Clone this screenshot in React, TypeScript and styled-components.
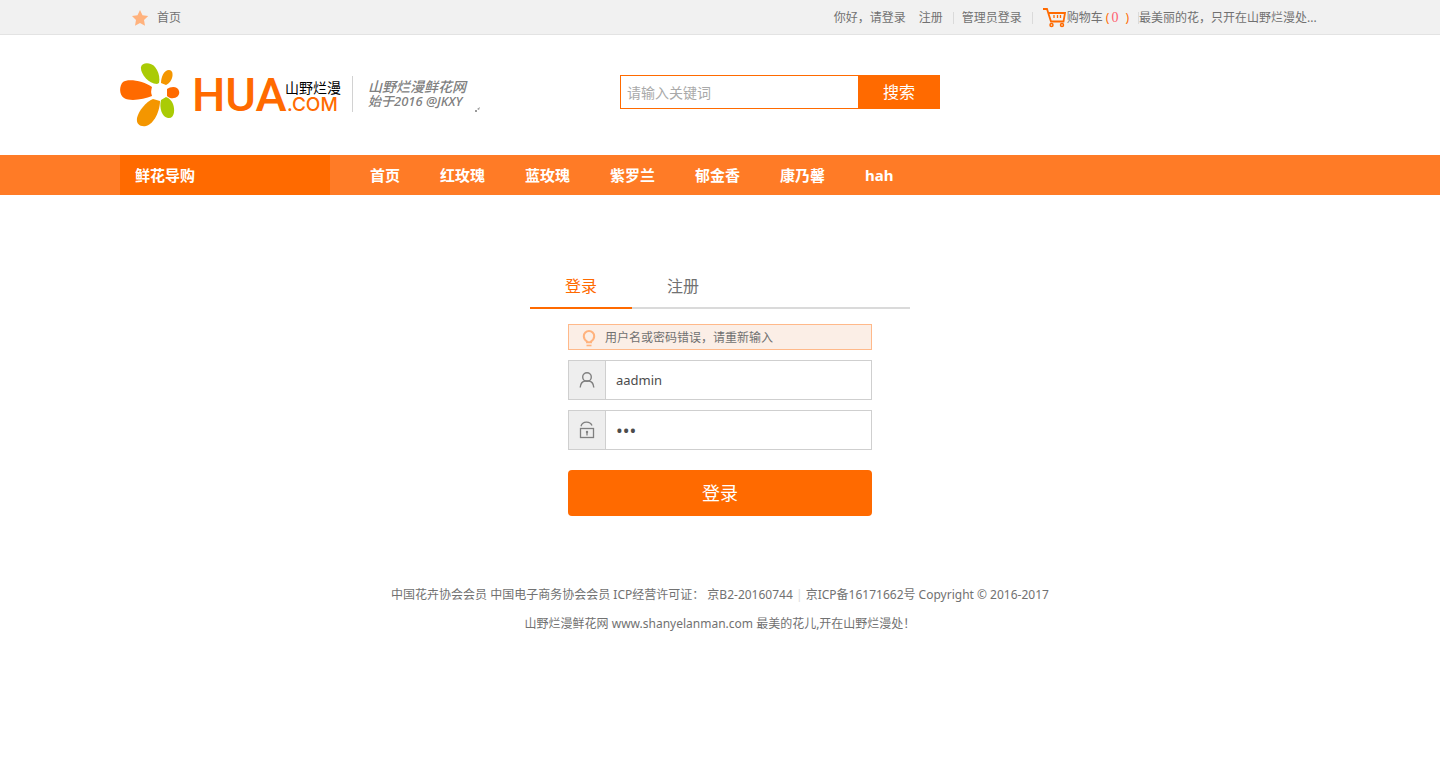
import React, { useState } from "react";
import styled, { createGlobalStyle } from "styled-components";

const orange = "#ff6a00";
const grey = "#717171";

const GlobalStyle = createGlobalStyle`
  *, *::before, *::after { box-sizing: border-box; }
  body {
    margin: 0;
    background: #fff;
    color: ${grey};
    font: 12px/18px "Noto Sans", "Noto Sans CJK SC", sans-serif;
  }
  a { color: inherit; text-decoration: none; }
  button, input { font-family: inherit; margin: 0; }
  ul { margin: 0; padding: 0; list-style: none; }
`;

const Container = styled.div`
  width: 100%;
  max-width: 1200px;
  margin: 0 auto;
  display: flex;
  align-items: center;
`;

const TopBar = styled.div`
  background: #f1f1f1;
  border-bottom: 1px solid #e3e3e3;
`;

const TopInner = styled(Container)`
  min-height: 34px;
  padding-top: 2px;
  justify-content: space-between;
`;

const HomeLink = styled.a`
  display: flex;
  align-items: center;
  gap: 8px;
  padding-left: 12px;
`;

const TopLinks = styled.div`
  display: flex;
  align-items: center;
`;

const TopLink = styled.a<{ $left?: number; $right?: number }>`
  display: flex;
  align-items: center;
  padding-left: ${(p) => p.$left ?? 0}px;
  padding-right: ${(p) => p.$right ?? 0}px;
`;

const Divider = styled.span`
  width: 1px;
  height: 12px;
  background: #dadada;
`;

const CartCount = styled.span`
  display: flex;
  gap: 2px;
  padding: 0 9px 0 3px;
  color: ${orange};
  b { font: 14px/18px "Liberation Serif", serif; color: #ff5f6f; padding-right: 5px; }
`;

const Header = styled(Container)`
  min-height: 120px;
  padding-bottom: 2px;
`;

const Brand = styled.div`
  display: flex;
  align-items: center;
  flex: 0 0 500px;
`;

const LogoLink = styled.a`
  display: block;
  height: 64px;
  padding-top: 1px;
`;

const Slogan = styled.div`
  display: flex;
  align-items: flex-start;
  width: 128px;
  height: 36px;
  margin-left: 11px;
  padding: 2px 0 0 15px;
  border-left: 1px solid #d2d2d2;
  color: #808080;
  font-style: italic;
  font-weight: 500;
`;

const SloganText = styled.p`
  width: 98px;
  margin: 0;
  white-space: nowrap;
  font-size: 13px;
  line-height: 13px;
  strong { display: block; font-size: 14px; font-weight: 500; line-height: 17px; }
`;

const SloganMark = styled.svg`
  flex: none;
  align-self: flex-end;
  margin-left: 9px;
`;

const Search = styled.form`
  display: flex;
  width: 320px;
  height: 34px;
  margin-bottom: 4px;
`;

const SearchInput = styled.input`
  flex: 1;
  min-width: 0;
  padding: 0 6px;
  border: 1px solid ${orange};
  border-right: 0;
  border-radius: 0;
  outline: 0;
  font-size: 14px;
  &::placeholder { color: #a9a9a9; opacity: 1; }
`;

const SearchButton = styled.button`
  width: 82px;
  padding: 0 0 2px;
  border: 0;
  background: ${orange};
  color: #fff;
  font-size: 16px;
`;

const NavBar = styled.nav`
  background: #ff7b26;
  color: #fff;
  font-size: 15px;
  font-weight: 700;
  line-height: 40px;
`;

const Guide = styled.a`
  width: 210px;
  margin-right: 20px;
  padding-left: 15px;
  background: ${orange};
`;

const NavList = styled.ul`
  display: flex;
  a { display: block; padding: 0 20px; }
`;

const LoginPanel = styled.main`
  width: 100%;
  max-width: 380px;
  margin: 70px auto 0;
`;

const Tabs = styled.div`
  display: flex;
  border-bottom: 2px solid #dadada;
`;

const Tab = styled.button<{ $active?: boolean }>`
  height: 44px;
  margin-bottom: -2px;
  padding: 0 35px 2px;
  border: 0;
  border-bottom: 2px solid ${(p) => (p.$active ? orange : "transparent")};
  background: none;
  color: ${(p) => (p.$active ? orange : grey)};
  font-size: 16px;
`;

const LoginForm = styled.form`
  display: flex;
  flex-direction: column;
  gap: 10px;
  padding: 15px 38px 0;
`;

const Notice = styled.div`
  display: flex;
  align-items: center;
  gap: 9px;
  height: 26px;
  padding: 2px 0 0 13px;
  border: 1px solid #ffb98a;
  background: #fbeee6;
`;

const Field = styled.div`
  display: flex;
  height: 40px;
  border: 1px solid #cfcfcf;
`;

const FieldIcon = styled.label`
  display: flex;
  align-items: center;
  justify-content: center;
  width: 37px;
  background: #eee;
  border-right: 1px solid #cfcfcf;
`;

const FieldInput = styled.input`
  flex: 1;
  min-width: 0;
  padding: 0 10px;
  border: 0;
  outline: 0;
  color: #4c4c4c;
  font-size: 13px;
  &[type="password"] { font-size: 18px; }
`;

const SubmitButton = styled.button`
  height: 46px;
  margin-top: 10px;
  padding: 0 0 2px;
  border: 0;
  border-radius: 4px;
  background: ${orange};
  color: #fff;
  font-size: 18px;
`;

const TopMessage = styled(TopLink)`
  min-width: 181px;
`;

const Footer = styled.footer`
  padding: 64px 0 20px;
  text-align: center;
  line-height: 29px;
  p { margin: 0; }
  i { color: #ddd; font-style: normal; }
`;

const Logo = () => (
  <svg width="221" height="64" viewBox="0 0 221 64" role="img" aria-label="HUA.COM">
    <path d="M37 21C28 21 20 10 21 4c1-5 10-5 14 0 4 5 5 11 4 16Z" fill="#aacb05" />
    <path d="M41 20c0-6 3-13 8-13 6 0 4 12-3 15Z" fill="#f49600" />
    <path d="M32 24C24 18 8 15 3 19c-4 4-4 13 1 16 7 4 20 1 28-2-1-3-1-6 0-9Z" fill={orange} />
    <path d="M47 26c4-3 11-3 12 2 2 6-7 10-12 5Z" fill={orange} />
    <path d="M40 38c0 10-6 23-14 25-6 1-10-2-9-8 2-8 9-16 16-19Z" fill="#f49600" />
    <path d="M41 37c-2 8 1 17 7 18 7 1 7-9 5-14-1-3-4-6-7-7Z" fill="#aacb05" />
    <circle cx="39" cy="29" r="7.500" fill="#fff" />
    <text x="72" y="48" fill={orange} fontFamily="Roboto, sans-serif" fontSize="47" fontWeight="500">HUA</text>
    <text x="167" y="48" fill={orange} fontFamily="Inter, sans-serif" fontSize="19" fontWeight="500">.COM</text>
    <text x="165" y="30" fill="#000" fontFamily="Noto Sans CJK SC, sans-serif" fontSize="14">山野烂漫</text>
  </svg>
);

const StarIcon = () => (
  <svg width="17" height="17" viewBox="0 0 17 17" aria-hidden="true">
    <path d="M8 0l2.500 5.200 5.700.8-4.200 4 1 5.700-5-2.700-5 2.700 1-5.700-4-4 5.500-.8Z" fill="#ffb27d" />
  </svg>
);

const CartIcon = () => (
  <svg width="24" height="20" viewBox="0 0 24 20" fill="none" stroke={orange} aria-hidden="true">
    <path d="M0 1h4l4 12.500h12.500L22 5H6" strokeWidth="1.800" />
    <path d="M11 7v3M14.500 7v3M17.500 7v3" strokeWidth="1.300" />
    <circle cx="8.500" cy="17" r="1.500" strokeWidth="1.500" />
    <circle cx="19" cy="17" r="1.500" strokeWidth="1.500" />
  </svg>
);

const BulbIcon = () => (
  <svg width="14" height="17" viewBox="0 0 14 17" fill="none" stroke="#ffb27d" strokeWidth="2" aria-hidden="true">
    <path d="M5 11.500C3 10 1.800 8.500 1.800 6.200a5.200 5.200 0 0 1 10.400 0c0 2.300-1.200 3.800-3.200 5.300v.8H5Z" />
    <path d="M4.500 15.500h5" strokeWidth="1.600" />
  </svg>
);

const UserIcon = () => (
  <svg width="16" height="16" viewBox="0 0 16 16" fill="none" stroke="#808080" strokeWidth="1.400" aria-hidden="true">
    <circle cx="8" cy="5" r="4.300" />
    <path d="M1.200 15.500c.3-3.800 2.500-6.200 5-6.500h3.600c2.500.3 4.700 2.700 5 6.500" />
  </svg>
);

const LockIcon = () => (
  <svg width="16" height="18" viewBox="0 0 16 18" fill="none" stroke="#808080" strokeWidth="1.300" aria-hidden="true">
    <rect x="1.500" y="7.500" width="13" height="9" />
    <path d="M2 5.200C3.500 0 11 0 13 4.500" />
    <path d="M8 12v2.500" />
    <circle cx="8" cy="11" r="1.200" fill="#808080" stroke="none" />
  </svg>
);

const navItems = ["首页", "红玫瑰", "蓝玫瑰", "紫罗兰", "郁金香", "康乃馨", "hah"];

export default function App() {
  const [user, setUser] = useState("aadmin");
  const [password, setPassword] = useState("123");
  return (
    <>
      <GlobalStyle />
      <TopBar>
        <TopInner>
          <HomeLink href="#"><StarIcon />首页</HomeLink>
          <TopLinks>
            <TopLink href="#" $right={13}>你好，请登录</TopLink>
            <TopLink href="#" $right={10}>注册</TopLink>
            <Divider />
            <TopLink href="#" $left={8} $right={10}>管理员登录</TopLink>
            <Divider />
            <TopLink href="#" $left={10}>
              <CartIcon />购物车
              <CartCount>(<b>0</b>)</CartCount>
            </TopLink>
            <Divider />
            <TopMessage href="#">最美丽的花，只开在山野烂漫处...</TopMessage>
          </TopLinks>
        </TopInner>
      </TopBar>
      <Header as="header">
        <Brand>
          <LogoLink href="#"><Logo /></LogoLink>
          <Slogan>
            <SloganText><strong>山野烂漫鲜花网</strong>始于2016 @JKXY</SloganText>
            <SloganMark width="5" height="5" viewBox="0 0 5 5" aria-hidden="true">
              <path d="M0 3h2v2H0zM2 2l3-2-1 3Z" fill="#999" />
            </SloganMark>
          </Slogan>
        </Brand>
        <Search onSubmit={(e) => e.preventDefault()}>
          <SearchInput aria-label="搜索" placeholder="请输入关键词" />
          <SearchButton>搜索</SearchButton>
        </Search>
      </Header>
      <NavBar>
        <Container>
          <Guide href="#">鲜花导购</Guide>
          <NavList>
            {navItems.map((item) => (
              <li key={item}><a href="#">{item}</a></li>
            ))}
          </NavList>
        </Container>
      </NavBar>
      <LoginPanel>
        <Tabs>
          <Tab type="button" $active>登录</Tab>
          <Tab type="button">注册</Tab>
        </Tabs>
        <LoginForm onSubmit={(e) => e.preventDefault()}>
          <Notice role="alert"><BulbIcon />用户名或密码错误，请重新输入</Notice>
          <Field>
            <FieldIcon htmlFor="user" aria-label="用户名"><UserIcon /></FieldIcon>
            <FieldInput id="user" value={user} onChange={(e) => setUser(e.target.value)} />
          </Field>
          <Field>
            <FieldIcon htmlFor="password" aria-label="密码"><LockIcon /></FieldIcon>
            <FieldInput id="password" type="password" value={password} onChange={(e) => setPassword(e.target.value)} />
          </Field>
          <SubmitButton>登录</SubmitButton>
        </LoginForm>
      </LoginPanel>
      <Footer>
        <p>中国花卉协会会员 中国电子商务协会会员 ICP经营许可证： 京B2-20160744 <i>|</i> 京ICP备16171662号 Copyright © 2016-2017</p>
        <p>山野烂漫鲜花网 www.shanyelanman.com 最美的花儿,开在山野烂漫处！</p>
      </Footer>
    </>
  );
}
